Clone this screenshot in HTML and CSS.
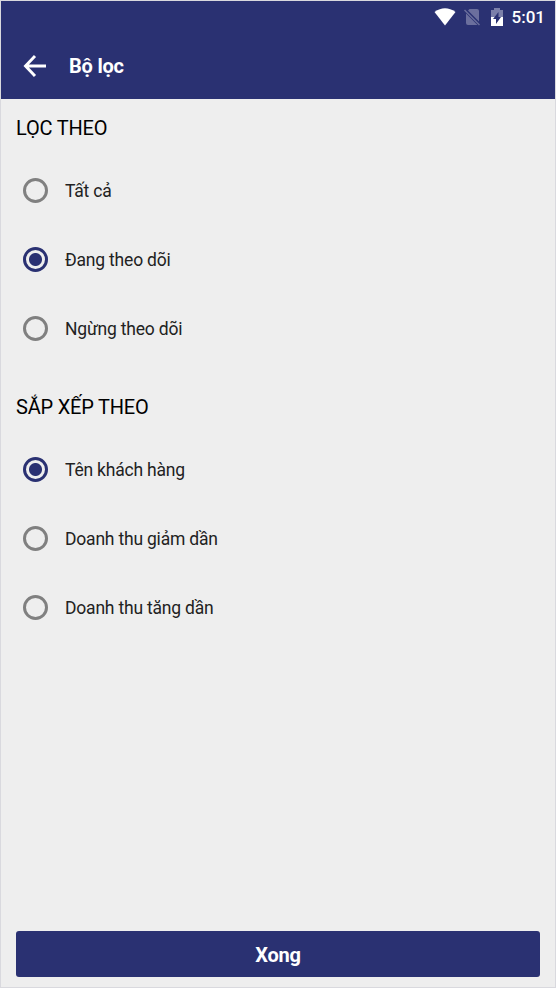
FILE: index.html
```html
<!doctype html>
<html lang="vi">
<head>
  <meta charset="utf-8">
  <title>Bộ lọc</title>
  <link rel="stylesheet" href="styles.css">
</head>

<body>
  <div class="screen">
    <div class="statusbar">
      <svg class="wifi" width="22" height="18" viewBox="0 0 22 18"><path d="M.500 4Q11-3.500 21.500 4L11 17.500z" fill="#fff"/></svg>
      <svg class="nosim" width="16" height="18" viewBox="0 0 16 18"><path d="M5.500 1H13q2 0 2 2v10.500L4 2.500zM2 5.500L13.500 17H4q-2 0-2-2z" fill="#6b6f9d"/><path d="M.500 2l15 15" stroke="#6b6f9d" stroke-width="1.500"/></svg>
      <svg class="battery" width="12" height="18" viewBox="0 0 12 18"><path d="M0 2h3V0h6v2h3v7H0z" fill="#7c80aa"/><path d="M0 9h12v9H0z" fill="#fff"/><path d="M7.500 4L2 11h3v5l5-7H7.500z" fill="#2a3172"/></svg>
      <span class="clock">5:01</span>
    </div>
    <div class="toolbar">
      <svg class="back" width="24" height="24" viewBox="0 0 24 24"><path d="M23 12H2.500M12 2l-9.500 10 9.500 10" fill="none" stroke="#fff" stroke-width="2.900"/></svg>
      <h1>Bộ lọc</h1>
    </div>

    <form class="filters">
      <h2>LỌC THEO</h2>
      <label><input type="radio" name="filter"><span>Tất cả</span></label>
      <label><input type="radio" name="filter" checked><span>Đang theo dõi</span></label>
      <label><input type="radio" name="filter"><span>Ngừng theo dõi</span></label>

      <h2 class="sort">SẮP XẾP THEO</h2>
      <label><input type="radio" name="sort" checked><span>Tên khách hàng</span></label>
      <label><input type="radio" name="sort"><span>Doanh thu giảm dần</span></label>
      <label><input type="radio" name="sort"><span>Doanh thu tăng dần</span></label>

      <button type="button" class="done">Xong</button>
    </form>
  </div>
</body>

</html>
```
FILE: styles.css
```css
* {
  box-sizing: border-box;
}
body {
  margin: 0;
  font-family: Roboto, "Noto Sans", sans-serif;
}
.screen {
  height: 988px;
  display: flex;
  flex-direction: column;
  background: #eeeeee;
  border: 1px solid #d9d9de;
}
.statusbar {
  height: 31px;
  display: flex;
  align-items: center;
  justify-content: flex-end;
  padding-right: 10px;
  background: #2a3172;
  color: #fff;
}
.nosim {
  margin-left: 8px;
}
.battery {
  margin-left: 11px;
}
.clock {
  margin-left: 9px;
  font-size: 17px;
  font-weight: 500;
}
.toolbar {
  height: 67.4px;
  display: flex;
  align-items: center;
  padding-left: 21.5px;
  background: #2a3172;
  color: #fff;
}
.toolbar h1 {
  margin: 1px 0 0 22.5px;
  font-size: 20px;
  font-weight: 700;
  letter-spacing: -0.2px;
}
.filters {
  flex: 1;
  display: flex;
  flex-direction: column;
  padding: 0.6px 15px 10px;
}
.filters h2 {
  height: 56px;
  margin: 0;
  font-size: 20px;
  font-weight: 400;
  line-height: 56px;
  letter-spacing: -0.2px;
  color: #000;
}
.filters .sort {
  margin-top: 16px;
}
.filters label {
  height: 69px;
  display: flex;
  align-items: center;
  padding-left: 7px;
  font-size: 17.5px;
  letter-spacing: -0.2px;
  color: #222;
}
.filters label span {
  padding-top: 2px;
}
.filters input {
  appearance: none;
  width: 25px;
  height: 25px;
  margin: 0 17px 0 0;
  border: 3px solid #808080;
  border-radius: 50%;
}
.filters input:checked {
  border-color: #2a3172;
  background: radial-gradient(circle, #2a3172 6px, transparent 7px);
}
.done {
  height: 46px;
  margin-top: auto;
  padding-top: 3px;
  border: 0;
  border-radius: 3px;
  background: #2a3172;
  color: #fff;
  font: 700 20px Roboto, "Noto Sans", sans-serif;
  letter-spacing: -0.2px;
}
```
